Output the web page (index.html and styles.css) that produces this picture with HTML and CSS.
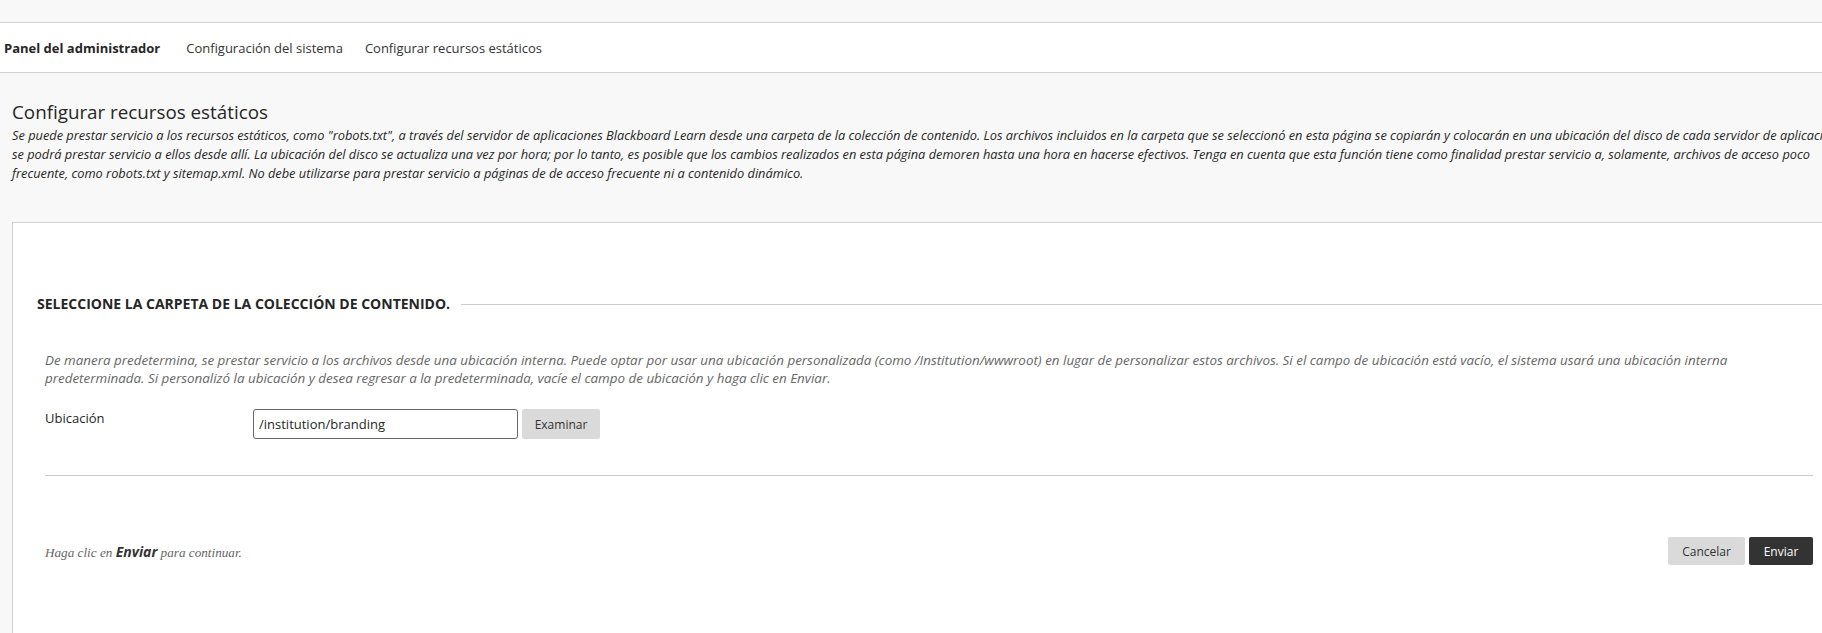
FILE: index.html
```html
<!DOCTYPE html>
<html lang="es">
<head>
    <meta charset="UTF-8">
    <meta name="viewport" content="width=device-width, initial-scale=1.0">
    <title>Configurar recursos estáticos</title>
    <link rel="stylesheet" href="styles.css">
</head>
<body>

<div class="page">
    <div class="topbar"></div>

    <div class="breadcrumbs">
        <span class="crumb current">Panel del administrador</span>
        <span class="crumb">Configuración del sistema</span>
        <span class="crumb">Configurar recursos estáticos</span>
    </div>

    <div class="page-header">
        <h1>Configurar recursos estáticos</h1>
        <p class="page-desc">Se puede prestar servicio a los recursos estáticos, como "robots.txt", a través del servidor de aplicaciones Blackboard Learn desde una carpeta de la colección de contenido. Los archivos incluidos en la carpeta que se seleccionó en esta página se copiarán y colocarán en una ubicación del disco de cada servidor de aplicaciones y se podrá prestar servicio a ellos desde allí. La ubicación del disco se actualiza una vez por hora; por lo tanto, es posible que los cambios realizados en esta página demoren hasta una hora en hacerse efectivos. Tenga en cuenta que esta función tiene como finalidad prestar servicio a, solamente, archivos de acceso poco frecuente, como robots.txt y sitemap.xml. No debe utilizarse para prestar servicio a páginas de de acceso frecuente ni a contenido dinámico.</p>
    </div>

    <div class="panel">
        <div class="step">
            <div class="step-title">
                <h2>Seleccione la carpeta de la colección de contenido.</h2>
                <span class="step-line"></span>
            </div>
            <div class="step-body">
                <p class="help">De manera predetermina, se prestar servicio a los archivos desde una ubicación interna. Puede optar por usar una ubicación personalizada (como /Institution/wwwroot) en lugar de personalizar estos archivos. Si el campo de ubicación está vacío, el sistema usará una ubicación interna predeterminada. Si personalizó la ubicación y desea regresar a la predeterminada, vacíe el campo de ubicación y haga clic en Enviar.</p>
                <div class="field">
                    <label for="location">Ubicación</label>
                    <input id="location" type="text" value="/institution/branding">
                    <button class="browse">Examinar</button>
                </div>
            </div>
        </div>

        <div class="submit-row">
            <p class="submit-hint">Haga clic en <strong>Enviar</strong> para continuar.</p>
            <div class="actions">
                <button class="btn cancel">Cancelar</button>
                <button class="btn primary">Enviar</button>
            </div>
        </div>
    </div>
</div>

</body>
</html>
```

FILE: styles.css
```css
html, body {
    margin: 0;
    padding: 0;
    overflow: hidden;
}
body {
    font-family: "Open Sans", Arial, sans-serif;
    background-color: #f8f8f8;
    color: #262626;
    height: 633px;
}
.page {
    width: 1876px;
}
.topbar {
    height: 22px;
    border-bottom: 1px solid #d2d2d2;
}
.breadcrumbs {
    display: flex;
    align-items: center;
    gap: 22px;
    height: 49px;
    padding-left: 4px;
    background-color: #ffffff;
    border-bottom: 1px solid #d2d2d2;
    font-size: 13px;
}
.crumb {
    color: #333333;
}
.crumb.current {
    font-weight: bold;
    color: #262626;
    margin-right: 4px;
}
.page-header {
    padding: 27px 12px 0 12px;
}
.page-header h1 {
    margin: 0;
    font-size: 18.8px;
    font-weight: normal;
    line-height: 25px;
    color: #262626;
}
.page-desc {
    margin: 1px 0 0 0;
    font-size: 12.8px;
    font-style: italic;
    line-height: 19px;
    color: #262626;
}
.panel {
    margin: 39px 0 0 12px;
    width: 1768px;
    height: 420px;
    padding: 71px 32px 0 32px;
    background-color: #ffffff;
    border: 1px solid #d2d2d2;
}
.step-title {
    display: flex;
    align-items: center;
    margin-left: -8px;
    margin-right: -32px;
}
.step-title h2 {
    margin: 0;
    font-size: 14px;
    font-weight: bold;
    text-transform: uppercase;
    line-height: 20px;
    color: #262626;
}
.step-line {
    flex: 1;
    margin-left: 11px;
    border-top: 1px solid #cccccc;
}
.step-body {
    padding: 37px 0 36px 0;
    border-bottom: 1px solid #cccccc;
}
.help {
    margin: 0 0 22px 0;
    font-size: 13.4px;
    font-style: italic;
    line-height: 18px;
    color: #666666;
}
.field {
    display: flex;
    align-items: flex-start;
}
.field label {
    width: 208px;
    font-size: 13px;
    line-height: 18px;
    color: #262626;
}
.field input {
    box-sizing: border-box;
    width: 265px;
    height: 30px;
    padding: 0 5px;
    font-family: "Open Sans", Arial, sans-serif;
    font-size: 13px;
    color: #262626;
    border: 1px solid #666666;
    border-radius: 3px;
    outline: none;
}
.browse {
    margin-left: 4px;
    width: 78px;
    height: 30px;
    font-family: "Open Sans", Arial, sans-serif;
    font-size: 12px;
    color: #333333;
    background-color: #dadada;
    border: none;
    border-radius: 2px;
}
.submit-row {
    display: flex;
    justify-content: space-between;
    align-items: center;
    padding-top: 61px;
}
.submit-hint {
    margin: 0;
    font-family: "Liberation Serif", "Times New Roman", serif;
    font-size: 13.2px;
    font-style: italic;
    color: #666666;
}
.submit-hint strong {
    font-family: "Open Sans", Arial, sans-serif;
    font-size: 14px;
    color: #333333;
}
.actions {
    display: flex;
    gap: 4px;
}
.btn {
    height: 28px;
    padding: 0;
    font-family: "Open Sans", Arial, sans-serif;
    font-size: 12px;
    border: none;
    border-radius: 2px;
}
.btn.cancel {
    width: 77px;
    color: #333333;
    background-color: #dadada;
}
.btn.primary {
    width: 64px;
    color: #ffffff;
    background-color: #333333;
}
```
